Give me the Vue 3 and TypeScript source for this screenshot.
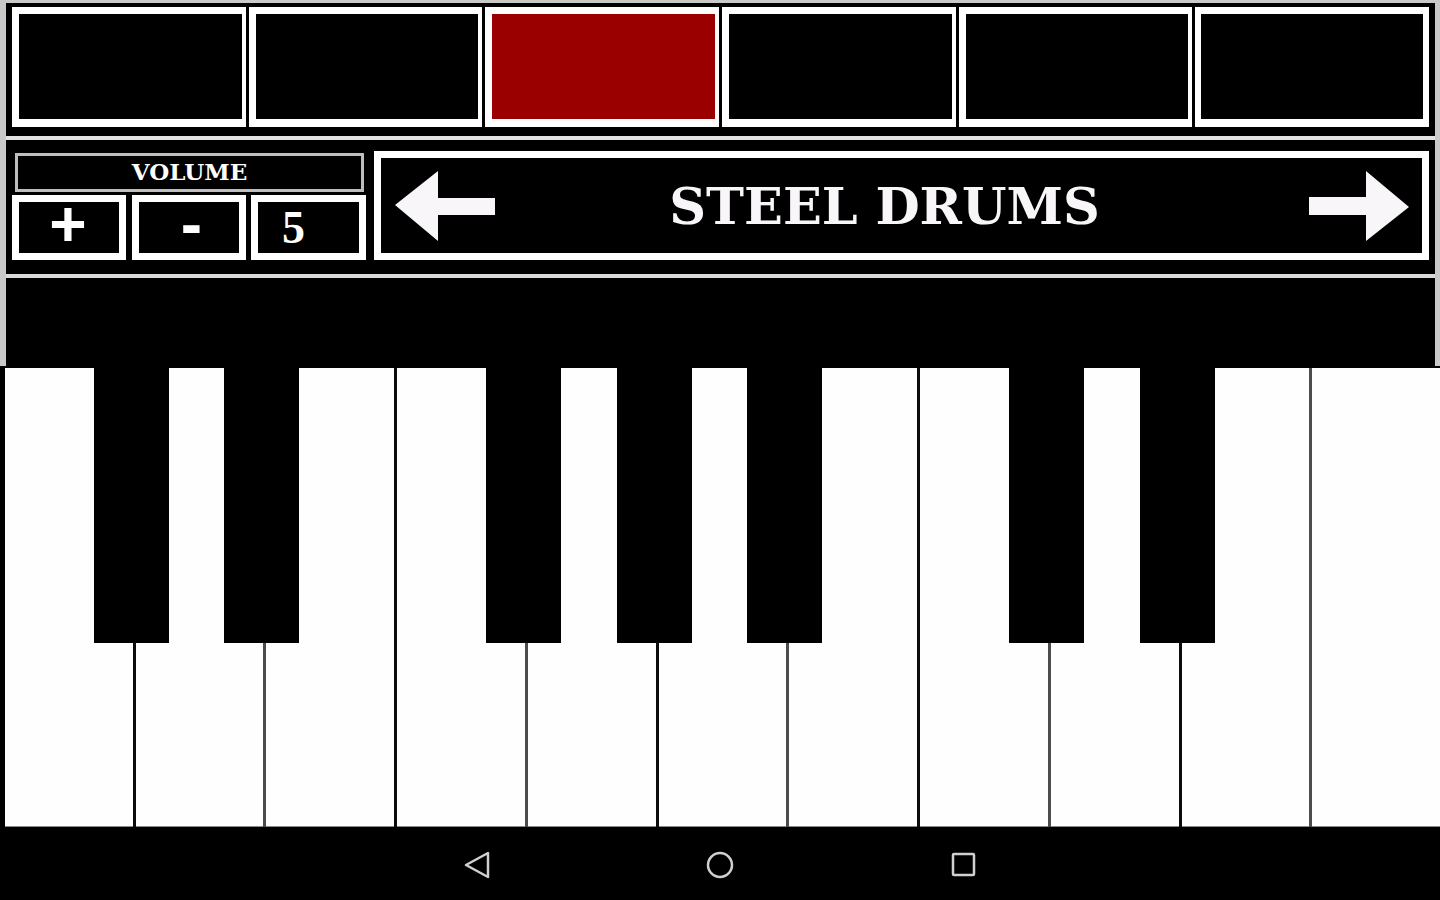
<script setup lang="ts">
import { computed, ref } from 'vue'

interface Key {
  note: string
  sharp?: string
}

const pads = [1, 2, 3, 4, 5, 6]
const activePad = ref(3)

const volume = ref(5)
const changeVolume = (step: number): void => {
  volume.value = Math.min(9, Math.max(0, volume.value + step))
}

const instruments = ['STEEL DRUMS', 'PIANO', 'ORGAN', 'STRINGS']
const instrumentIndex = ref(0)
const instrument = computed(() => instruments[instrumentIndex.value])
const changeInstrument = (step: number): void => {
  instrumentIndex.value = (instrumentIndex.value + step + instruments.length) % instruments.length
}

const keys: Key[] = [
  { note: 'C4', sharp: 'C#4' },
  { note: 'D4', sharp: 'D#4' },
  { note: 'E4' },
  { note: 'F4', sharp: 'F#4' },
  { note: 'G4', sharp: 'G#4' },
  { note: 'A4', sharp: 'A#4' },
  { note: 'B4' },
  { note: 'C5', sharp: 'C#5' },
  { note: 'D5', sharp: 'D#5' },
  { note: 'E5' },
  { note: 'F5' },
]
</script>

<template>
  <div class="app">
    <header class="panel">
      <div class="pads">
        <button
          v-for="pad in pads"
          :key="pad"
          type="button"
          class="pad"
          :class="{ active: pad === activePad }"
          :aria-label="`Pad ${pad}`"
          :aria-pressed="pad === activePad"
          @click="activePad = pad"
        ></button>
      </div>

      <div class="controls">
        <section class="volume" aria-labelledby="volume-title">
          <h2 id="volume-title" class="volume-title">VOLUME</h2>
          <div class="volume-row">
            <button type="button" class="box" aria-label="Volume up" @click="changeVolume(1)">+</button>
            <button type="button" class="box minus" aria-label="Volume down" @click="changeVolume(-1)">-</button>
            <output class="box level" aria-labelledby="volume-title">{{ volume }}</output>
          </div>
        </section>

        <section class="display">
          <button type="button" class="arrow" aria-label="Previous instrument" @click="changeInstrument(-1)">
            <svg width="100" height="70" viewBox="0 0 100 70" aria-hidden="true">
              <path d="M0 34 43 0V27H100V44H43V70Z" fill="#f8f6f9" />
            </svg>
          </button>
          <h1 class="instrument">{{ instrument }}</h1>
          <button type="button" class="arrow" aria-label="Next instrument" @click="changeInstrument(1)">
            <svg width="100" height="70" viewBox="0 0 100 70" aria-hidden="true">
              <path d="M100 36 57 0V26H0V44H57V70Z" fill="#f8f6f9" />
            </svg>
          </button>
        </section>
      </div>

      <div class="strip"></div>
    </header>

    <main class="keyboard">
      <div v-for="key in keys" :key="key.note" class="key">
        <button type="button" class="white" :aria-label="key.note"></button>
        <button v-if="key.sharp" type="button" class="black" :aria-label="key.sharp"></button>
      </div>
    </main>

    <nav class="system" aria-label="System">
      <button type="button" class="system-button" aria-label="Back">
        <svg width="28" height="28" viewBox="0 0 28 28" aria-hidden="true">
          <path d="M3 14 25 2V26Z" />
        </svg>
      </button>
      <button type="button" class="system-button" aria-label="Home">
        <svg width="28" height="28" viewBox="0 0 28 28" aria-hidden="true">
          <circle cx="14" cy="14" r="12" />
        </svg>
      </button>
      <button type="button" class="system-button" aria-label="Recent apps">
        <svg width="28" height="28" viewBox="0 0 28 28" aria-hidden="true">
          <rect x="4" y="3" width="21" height="21" rx="1" />
        </svg>
      </button>
    </nav>
  </div>
</template>

<style>
body {
  margin: 0;
  background: #000;
}
</style>

<style scoped>
.app {
  display: flex;
  flex-direction: column;
  min-height: 100vh;
  background: #000;
  color: #fff;
  font-family: 'DejaVu Serif', serif;
}

button {
  margin: 0;
  padding: 0;
  border: 0;
  background: #000;
  color: inherit;
  cursor: pointer;
}

.panel {
  border: solid #c9cac7;
  border-width: 3px 5px 0 6px;
}

.pads {
  display: grid;
  grid-template-columns: repeat(6, 1fr);
  gap: 3px;
  padding: 4px 6px 9px;
  border-bottom: 4px solid #e2e2e2;
}

.pad {
  height: 120px;
  border: solid #fff;
  border-width: 7px 4px 8px 7px;
}

.pad:last-child {
  border-width: 7px 6px 8px 6px;
}

.pad.active {
  background: #9b0000;
}

.controls {
  display: flex;
  gap: 8px;
  padding: 11px 6px 14px;
  border-bottom: 4px solid #dadada;
}

.volume {
  width: 354px;
}

.volume-title {
  box-sizing: border-box;
  height: 39px;
  margin: 2px 2px 3px 3px;
  border: 3px solid #bdbdbd;
  font-size: 23px;
  line-height: 32px;
  text-align: center;
}

.volume-row {
  display: grid;
  grid-template-columns: 114px 114px 115px;
  justify-content: space-between;
}

.box {
  display: flex;
  align-items: center;
  justify-content: center;
  box-sizing: border-box;
  height: 65px;
  padding: 0 2px 7px 0;
  border: 7px solid #fff;
  font: bold 64px/44px 'Liberation Sans', sans-serif;
}

.minus {
  padding: 0 0 7px 6px;
}

.level {
  padding: 0 30px 0 0;
  font: bold 46px/51px 'Liberation Serif', serif;
}

.display {
  display: flex;
  flex: 1;
  align-items: center;
  box-sizing: border-box;
  height: 109px;
  padding: 0 13px 0 14px;
  border: 7px solid #fff;
}

.arrow,
.arrow svg {
  display: block;
}

.instrument {
  flex: 1;
  margin: 0 35px 0 0;
  color: #f8f6f9;
  font-size: 51px;
  line-height: 60px;
  text-align: center;
  white-space: nowrap;
}

.strip {
  height: 88px;
}

.keyboard {
  display: flex;
  flex: 1;
  min-height: 300px;
  padding: 2px 0 0 5px;
}

.key {
  position: relative;
  display: flex;
  flex: 1 1 0;
  border-right: 3px solid #0c0c0c;
}

.key:nth-child(even) {
  border-color: #4c4c4c;
}

.key:last-child {
  border-right: 0;
}

.white {
  flex: 1;
  border-bottom: 1px solid #8a8a8a;
  background: #fefefe;
}

.black {
  position: absolute;
  z-index: 1;
  top: 0;
  right: -36px;
  width: 75px;
  height: 60%;
}

.system {
  display: flex;
  justify-content: center;
  gap: 215px;
  padding: 24px 0 21px;
}

.system-button svg {
  display: block;
  fill: none;
  stroke: #d0d0d0;
  stroke-width: 2.500;
  stroke-linejoin: round;
}
</style>
